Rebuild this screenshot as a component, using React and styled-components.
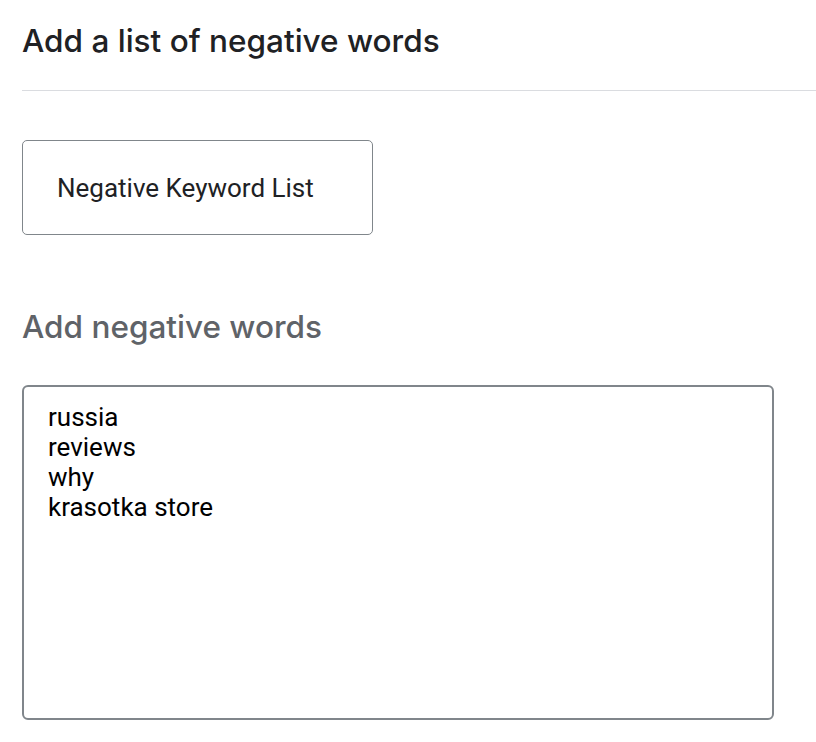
import React from "react";
import styled, { createGlobalStyle } from "styled-components";

const GlobalStyle = createGlobalStyle`
  body {
    margin: 0;
    background: #fff;
  }
`;

const Page = styled.div`
  padding: 21px 0 0 22px;
  display: flex;
  flex-direction: column;
`;

const Title = styled.h2`
  margin: 0;
  font-family: Inter, "Open Sans", sans-serif;
  font-size: 31.5px;
  font-weight: 500;
  letter-spacing: 0;
  line-height: 40px;
  color: ${(props) => (props.muted ? "#5f6368" : "#202124")};
`;

const Divider = styled.hr`
  margin: 29px 0 0;
  border: 0;
  border-top: 1px solid #dadce0;
`;

const ListBox = styled.div`
  margin-top: 49px;
  width: 351px;
  height: 95px;
  box-sizing: border-box;
  border: 1px solid #80868b;
  border-radius: 5px;
  display: flex;
  align-items: center;
  padding-left: 34px;
  font-family: Roboto, sans-serif;
  font-size: 26px;
  color: #202124;
`;

const Section = styled.div`
  margin-top: 72px;
`;

const WordsArea = styled.textarea`
  display: block;
  margin-top: 38px;
  width: 752px;
  height: 335px;
  box-sizing: border-box;
  border: 2px solid #80868b;
  border-radius: 6px;
  padding: 15px 24px;
  resize: none;
  font-family: Roboto, sans-serif;
  font-size: 26px;
  line-height: 30px;
  color: #000;
  outline: none;
`;

export default function App() {
  return (
    <>
      <GlobalStyle />
      <Page>
        <Title>Add a list of negative words</Title>
        <Divider />
        <ListBox>Negative Keyword List</ListBox>
        <Section>
          <Title muted>Add negative words</Title>
          <WordsArea
            readOnly
            defaultValue={"russia\nreviews\nwhy\nkrasotka store"}
          />
        </Section>
      </Page>
    </>
  );
}
